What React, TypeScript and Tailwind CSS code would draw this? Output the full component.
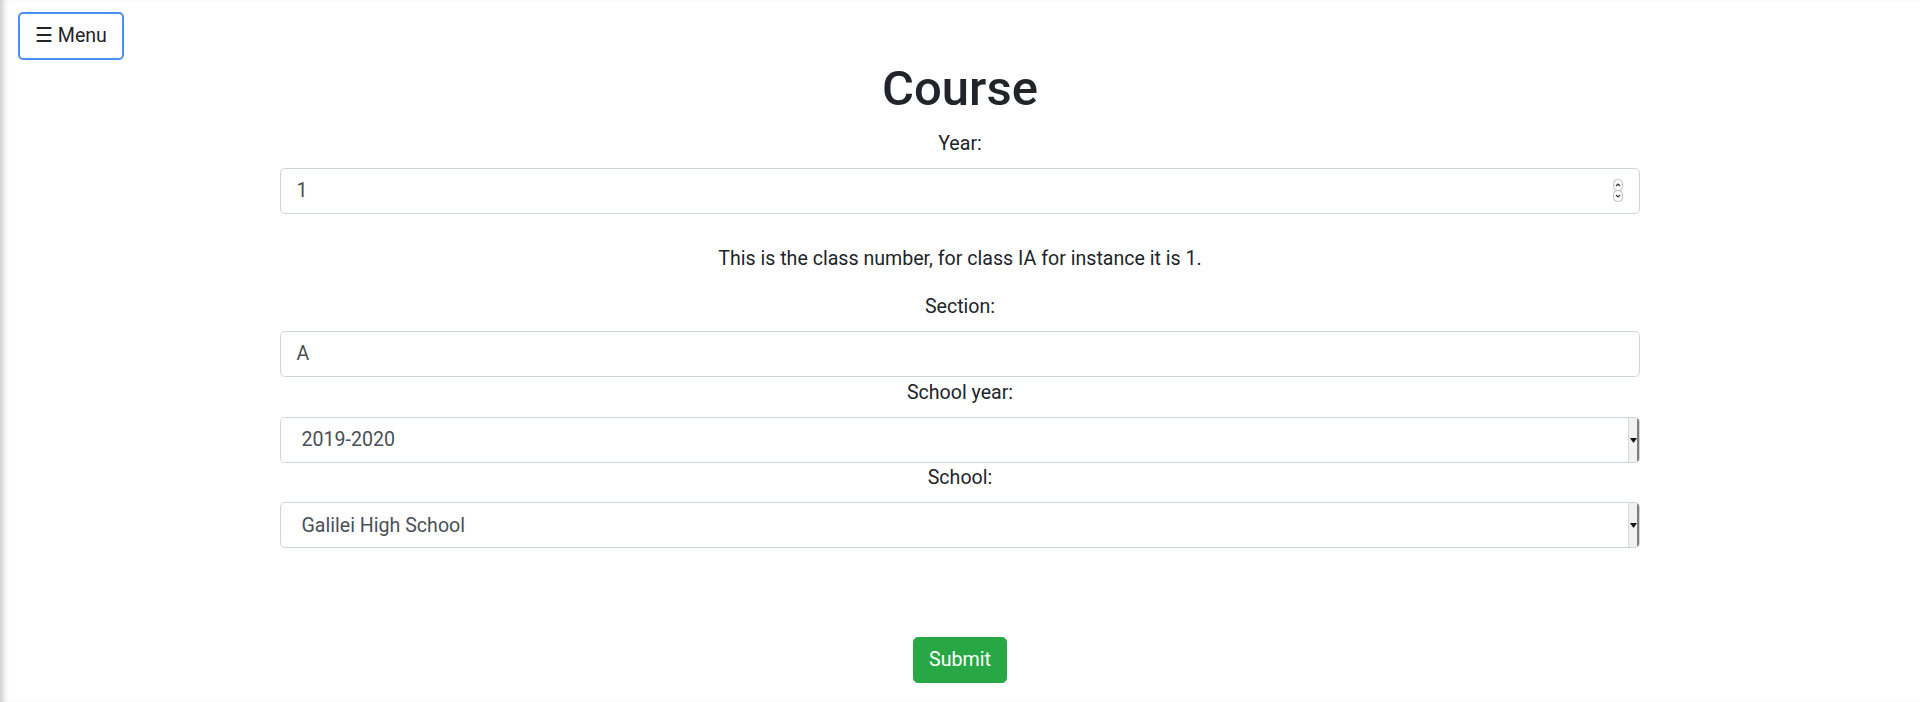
import React from 'react';

const font = "font-['Roboto','Liberation_Sans',sans-serif]";

const Label: React.FC<{ text: string; extra?: string }> = ({ text, extra = '' }) => (
    <label className={`block text-center text-[19.6px] leading-[28.8px] text-[#212529] mb-[9.6px] ${extra}`}>{text}</label>
);

const NumberSpinner: React.FC = () => (
    <svg width="10" height="23" viewBox="0 0 10 23" className="shrink-0">
        <rect x="0.5" y="0.5" width="9" height="11" rx="4" fill="#fff" stroke="#c4bab2" />
        <rect x="0.5" y="11.5" width="9" height="11" rx="4" fill="#fff" stroke="#c4bab2" />
        <path d="M3 7 L5 5 L7 7" fill="none" stroke="#333" strokeWidth="1.2" />
        <path d="M3 16 L5 18 L7 16" fill="none" stroke="#333" strokeWidth="1.2" />
    </svg>
);

const FakeSelect: React.FC<{ value: string }> = ({ value }) => (
    <div className="flex h-[46px] w-full items-stretch rounded-[4.8px] border border-[#ced4da] bg-white overflow-hidden">
        <span className="flex flex-1 items-center pl-[20.5px] pt-[1px] text-[19.6px] leading-[28.8px] text-[#495057]">{value}</span>
        <span className="flex w-[11px] items-center justify-center bg-[#f1f1f1] border-l border-[#d8d8d8] border-r-2 border-r-[#7e7e7e]">
            <svg width="7" height="5" viewBox="0 0 7 5">
                <path d="M0 0 H7 L3.5 5 Z" fill="#111" />
            </svg>
        </span>
    </div>
);

const App: React.FC = () => {
    return (
        <div className={`${font} min-h-[702px] bg-white pt-[12px] pl-[18px] shadow-[inset_7px_0_6px_-4px_rgba(0,0,0,0.22)]`}>
            {/* Menu toggle */}
            <button className="flex items-center gap-[5px] rounded-[5px] border-2 border-[#4b8ef5] bg-white px-[14.8px] py-[7.6px] text-[19.6px] leading-[28.8px] text-[#212529]">
                <span>☰</span>
                <span>Menu</span>
            </button>

            <div className="mx-auto w-[1360px] -translate-x-[9px]">
                <h1 className="mt-[0.5px] mb-[11.5px] text-center text-[49px] font-medium leading-[57.6px] text-[#212529]">Course</h1>

                <Label text="Year:" />
                <div className="flex h-[46px] items-center rounded-[4.8px] border border-[#ced4da] bg-white pl-[15.4px] pr-[16px]">
                    <span className="flex-1 text-[19.6px] leading-[28.8px] text-[#495057]">1</span>
                    <NumberSpinner />
                </div>

                <p className="mt-[31px] mb-[19.2px] text-center text-[19.6px] leading-[28.8px] text-[#212529]">
                    This is the class number, for class IA for instance it is 1.
                </p>

                <Label text="Section:" />
                <div className="flex h-[46px] items-center rounded-[4.8px] border border-[#ced4da] bg-white px-[15.4px]">
                    <span className="text-[19.6px] leading-[28.8px] text-[#495057]">A</span>
                </div>

                <Label text="School year:" extra="pt-[1.5px]" />
                <FakeSelect value="2019-2020" />

                <Label text="School:" extra="pt-[0.8px]" />
                <FakeSelect value="Galilei High School" />

                <div className="mt-[88.5px] flex justify-center">
                    <button className="h-[46px] rounded-[4.8px] border-[1.2px] border-[#28a745] bg-[#28a745] px-[14.8px] text-[19.6px] leading-[28.8px] text-white">
                        Submit
                    </button>
                </div>
            </div>
        </div>
    );
};

export default App;
